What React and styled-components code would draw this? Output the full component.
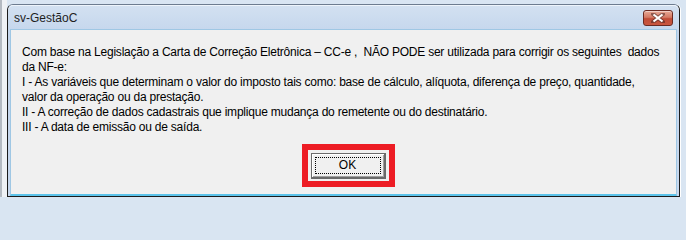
import React from 'react';
import styled, { createGlobalStyle } from 'styled-components';

const GlobalStyle = createGlobalStyle`
  html, body {
    margin: 0;
    padding: 0;
    background: #d9e5f2;
  }
`;

const Desktop = styled.div`
  display: flex;
  align-items: flex-start;
  width: 686px;
  height: 204px;
  overflow: hidden;
  background: #d9e5f2;
  font-family: 'Liberation Sans', Arial, sans-serif;
`;

const BackWindow = styled.div`
  flex: none;
  width: 7px;
  height: 197px;
  background: #eef1f5;
  border-left: 2px solid #b4bac2;
  box-sizing: border-box;
`;

const Window = styled.div`
  flex: none;
  display: flex;
  flex-direction: column;
  width: 673px;
  margin-top: 4px;
  box-sizing: border-box;
  border: 1px solid #1b1b1b;
  border-top-color: #6d7c8f;
  border-radius: 6px 6px 0 0;
  background: linear-gradient(#d3e1f1, #c3d5ec 30px, #c7d8ee);
  box-shadow: 1px 0 0 #ffffff;
`;

const TitleBar = styled.div`
  display: flex;
  align-items: center;
  justify-content: space-between;
  height: 24px;
  padding: 0 4px 0 6px;
  border-radius: 5px 5px 0 0;
  box-shadow: inset 0 1px 0 #eef4fb;
`;

const Title = styled.span`
  font-size: 12px;
  color: #1e1e1e;
  padding-top: 1px;
`;

const CloseButton = styled.div`
  display: flex;
  align-items: center;
  justify-content: center;
  width: 30px;
  height: 16px;
  margin-top: 2px;
  margin-right: 2px;
  box-sizing: border-box;
  border: 1px solid #6b2a22;
  border-radius: 3px;
  background: linear-gradient(#e8a996, #d47a65 45%, #c04c37 55%, #c9563f);
  box-shadow: inset 0 1px 0 rgba(255, 255, 255, 0.45);
`;

const Client = styled.div`
  display: flex;
  flex-direction: column;
  margin: 0 2px;
  border: 1px solid #9fc7e4;
  border-bottom: 2px solid #5cc3ea;
  background: #f0f0f0;
  padding: 15px 0 7px 11px;
`;

const Message = styled.div`
  font-size: 12px;
  line-height: 15px;
  height: 15px;
  letter-spacing: -0.22px;
  color: #000;
  white-space: pre;
`;

const ButtonRow = styled.div`
  display: flex;
  justify-content: center;
  margin-top: 9px;
  padding-right: 2px;
`;

const Highlight = styled.div`
  display: flex;
  align-items: center;
  justify-content: center;
  width: 93px;
  height: 43px;
  box-sizing: border-box;
  border: 6px solid #ed1c24;
`;

const OkButton = styled.button`
  width: 75px;
  height: 26px;
  padding: 3px;
  box-sizing: border-box;
  background: #f0f0f0;
  border: 1px solid #6a6a6a;
  border-right-width: 2px;
  border-bottom-width: 2px;
  box-shadow: inset 1px 1px 0 #ffffff, inset -1px -1px 0 #a0a0a0;
  font-family: 'Liberation Sans', Arial, sans-serif;
  font-size: 12px;
  color: #000;
`;

const FocusRing = styled.span`
  display: flex;
  align-items: center;
  justify-content: center;
  height: 100%;
  box-sizing: border-box;
  border: 1px dotted #000;
`;

const CloseGlyph = () => (
  <svg width="14" height="10" viewBox="0 0 14 10">
    <path
      d="M2 1 L12 9 M12 1 L2 9"
      stroke="#4a2a26"
      strokeWidth="4"
      strokeLinecap="square"
      opacity="0.55"
    />
    <path d="M2.5 1.5 L11.5 8.5 M11.5 1.5 L2.5 8.5" stroke="#ffffff" strokeWidth="2.2" />
  </svg>
);

const lines = [
  'Com base na Legislação a Carta de Correção Eletrônica – CC-e ,  NÃO PODE ser utilizada para corrigir os seguintes  dados',
  'da NF-e:',
  'I - As variáveis que determinam o valor do imposto tais como: base de cálculo, alíquota, diferença de preço, quantidade,',
  'valor da operação ou da prestação.',
  'II - A correção de dados cadastrais que implique mudança do remetente ou do destinatário.',
  'III - A data de emissão ou de saída.',
];

export default function App() {
  return (
    <>
      <GlobalStyle />
      <Desktop>
        <BackWindow />
        <Window>
          <TitleBar>
            <Title>sv-GestãoC</Title>
            <CloseButton>
              <CloseGlyph />
            </CloseButton>
          </TitleBar>
          <Client>
            {lines.map(line => (
              <Message key={line}>{line}</Message>
            ))}
            <ButtonRow>
              <Highlight>
                <OkButton>
                  <FocusRing>OK</FocusRing>
                </OkButton>
              </Highlight>
            </ButtonRow>
          </Client>
        </Window>
      </Desktop>
    </>
  );
}
